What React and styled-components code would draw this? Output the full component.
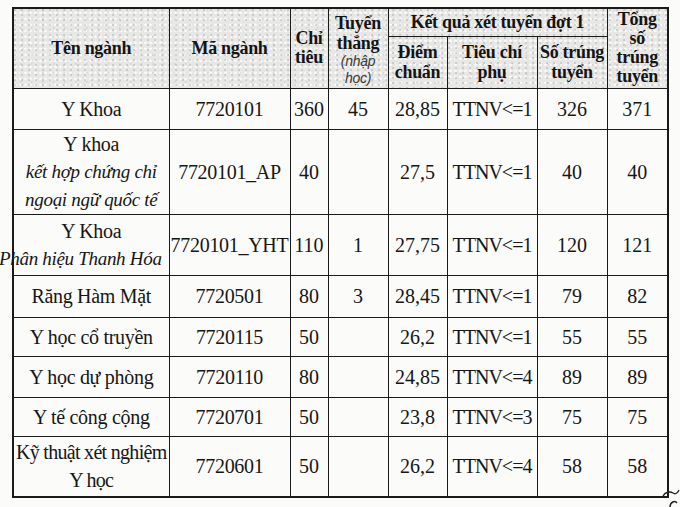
import styled, { createGlobalStyle } from 'styled-components'

const GlobalStyle = createGlobalStyle`
  html, body {
    margin: 0;
    padding: 0;
    background: #fbfbf9;
  }
  body {
    font-family: 'Liberation Serif', 'Times New Roman', serif;
    color: #161616;
  }
`

const Page = styled.div`
  position: relative;
  width: 680px;
  height: 507px;
  padding: 7px 0 0 12px;
  box-sizing: border-box;
  overflow: hidden;
`

const Table = styled.table`
  width: 655px;
  table-layout: fixed;
  border-collapse: collapse;
  border: 2px solid #1a1a1a;
`

const HeadRow = styled.tr`
  height: ${p => p.$h}px;
  background-color: #e7e7e5;
  background-image:
    radial-gradient(circle at 30% 40%, rgba(120,120,120,0.28) 0.7px, transparent 1.2px),
    radial-gradient(circle at 70% 20%, rgba(160,160,160,0.25) 0.7px, transparent 1.2px),
    radial-gradient(circle at 50% 80%, rgba(255,255,255,0.75) 1px, transparent 1.6px);
  background-size: 7px 5px, 11px 9px, 5px 6px;
`

const Th = styled.th`
  border: 1.5px solid #1a1a1a;
  padding: ${p => (p.$top ? `${p.$top}px 2px 0` : '0 2px')};
  font-weight: 700;
  font-size: 18px;
  line-height: ${p => p.$lh || 20}px;
  letter-spacing: -0.3px;
  text-align: center;
  vertical-align: ${p => (p.$top ? 'top' : 'middle')};
  color: #141414;
`

const Note = styled.span`
  display: block;
  font-family: 'Liberation Sans', Arial, sans-serif;
  font-style: italic;
  font-weight: 400;
  font-size: 14px;
  line-height: 17px;
  color: #3a3a3a;
`

const Row = styled.tr`
  height: ${p => p.$h}px;
`

const Td = styled.td`
  border: 1.5px solid #1a1a1a;
  padding: 0 1px;
  font-size: 20px;
  line-height: 28px;
  letter-spacing: ${p => p.$ls || 0}px;
  text-align: center;
  vertical-align: middle;
  white-space: nowrap;
  overflow: visible;
`

const Sub = styled.span`
  display: block;
  font-style: italic;
  font-size: 19px;
  letter-spacing: -0.3px;
  margin: ${p => (p.$wide ? '0 4px 0 -18px' : '0 -6px')};
`

const Curl = styled.svg`
  position: absolute;
  right: 0;
  bottom: 0;
`

const rows = [
  { h: 41, name: ['Y Khoa'], code: '7720101', quota: '360', direct: '45', score: '28,85', rule: 'TTNV<=1', passed: '326', total: '371' },
  { h: 84, name: ['Y khoa'], sub: ['kết hợp chứng chỉ', 'ngoại ngữ quốc tế'], code: '7720101_AP', quota: '40', direct: '', score: '27,5', rule: 'TTNV<=1', passed: '40', total: '40' },
  { h: 61, name: ['Y Khoa'], sub: ['Phân hiệu Thanh Hóa'], wide: true, code: '7720101_YHT', quota: '110', direct: '1', score: '27,75', rule: 'TTNV<=1', passed: '120', total: '121' },
  { h: 42, name: ['Răng Hàm Mặt'], code: '7720501', quota: '80', direct: '3', score: '28,45', rule: 'TTNV<=1', passed: '79', total: '82' },
  { h: 39, name: ['Y học cổ truyền'], code: '7720115', quota: '50', direct: '', score: '26,2', rule: 'TTNV<=1', passed: '55', total: '55' },
  { h: 41, name: ['Y học dự phòng'], code: '7720110', quota: '80', direct: '', score: '24,85', rule: 'TTNV<=4', passed: '89', total: '89' },
  { h: 39, name: ['Y tế công cộng'], code: '7720701', quota: '50', direct: '', score: '23,8', rule: 'TTNV<=3', passed: '75', total: '75' },
  { h: 61, name: ['Kỹ thuật xét nghiệm', 'Y học'], tight: true, code: '7720601', quota: '50', direct: '', score: '26,2', rule: 'TTNV<=4', passed: '58', total: '58' },
]

const widths = [156, 121, 38, 60, 59, 90, 70, 61]

export default function App() {
  return (
    <Page>
      <GlobalStyle />
      <Table>
        <colgroup>
          {widths.map((w, i) => <col key={i} style={{ width: w }} />)}
        </colgroup>
        <thead>
          <HeadRow $h={28}>
            <Th rowSpan={2}>Tên ngành</Th>
            <Th rowSpan={2}>Mã ngành</Th>
            <Th rowSpan={2} $lh={19}>Chỉ<br />tiêu</Th>
            <Th rowSpan={2} $top={4} $lh={20}>
              Tuyển<br />thẳng
              <Note>(nhập<br />học)</Note>
            </Th>
            <Th colSpan={3}>Kết quả xét tuyển đợt 1</Th>
            <Th rowSpan={2} $top={1} $lh={19}>Tổng<br />số<br />trúng<br />tuyển</Th>
          </HeadRow>
          <HeadRow $h={52}>
            <Th>Điểm<br />chuẩn</Th>
            <Th>Tiêu chí<br />phụ</Th>
            <Th>Số trúng<br />tuyển</Th>
          </HeadRow>
        </thead>
        <tbody>
          {rows.map((r, i) => (
            <Row key={i} $h={r.h}>
              <Td $ls={r.tight ? -0.7 : -0.3}>
                {r.name.map((n, j) => <div key={j}>{n}</div>)}
                {r.sub && r.sub.map((s, j) => <Sub key={j} $wide={r.wide}>{s}</Sub>)}
              </Td>
              <Td $ls={-0.3}>{r.code}</Td>
              <Td>{r.quota}</Td>
              <Td>{r.direct}</Td>
              <Td>{r.score}</Td>
              <Td $ls={-1}>{r.rule}</Td>
              <Td>{r.passed}</Td>
              <Td>{r.total}</Td>
            </Row>
          ))}
        </tbody>
      </Table>
      <Curl width="18" height="20" viewBox="0 0 18 20">
        <path d="M1 9 C3 5 8 4 11 6 C14 8 16 5 17 3" fill="none" stroke="#222" strokeWidth="1.4" />
        <path d="M8 20 C8 15 13 13 15 16" fill="none" stroke="#222" strokeWidth="1.4" />
      </Curl>
    </Page>
  )
}
